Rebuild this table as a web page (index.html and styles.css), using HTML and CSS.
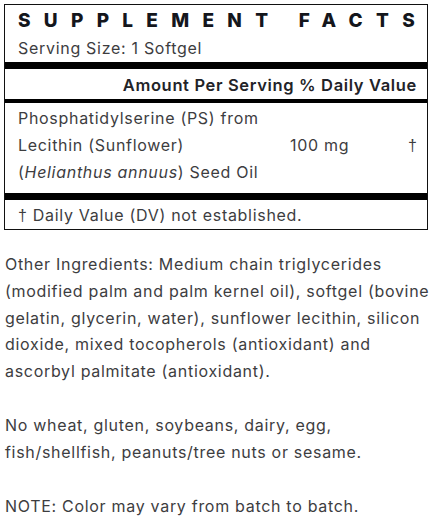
FILE: index.html
```html
<!DOCTYPE html>
<html>
<head>
<meta charset="utf-8">
<link rel="stylesheet" href="styles.css">
</head>
<body>
<div class="facts">
  <div class="title">SUPPLEMENT FACTS</div>
  <div class="serving">Serving Size: 1 Softgel</div>
  <div class="bar thick"></div>
  <div class="head">Amount Per Serving % Daily Value</div>
  <div class="bar thin"></div>
  <div class="row">
    <div class="name">Phosphatidylserine (PS) from<br>Lecithin (Sunflower)<br>(<i>Helianthus annuus</i>) Seed Oil</div>
    <div class="amt">100 mg</div>
    <div class="dv"><span class="dagger">†</span></div>
  </div>
  <div class="bar thick"></div>
  <div class="foot"><span class="dagger">†</span> Daily Value (DV) not established.</div>
</div>
<p class="text">Other Ingredients: Medium chain triglycerides<br>(modified palm and palm kernel oil), softgel (bovine<br>gelatin, glycerin, water), sunflower lecithin, silicon<br>dioxide, mixed tocopherols (antioxidant) and<br>ascorbyl palmitate (antioxidant).</p>
<p class="text">No wheat, gluten, soybeans, dairy, egg,<br>fish/shellfish, peanuts/tree nuts or sesame.</p>
<p class="text">NOTE: Color may vary from batch to batch.</p>
</body>
</html>
```

FILE: styles.css
```css
html, body { margin: 0; padding: 0; background: #fff; }
body {
  font-family: Inter, "Noto Sans", sans-serif;
  color: #3d3d3f;
  padding: 4px 0 0 4px;
  letter-spacing: 0.7px;
}
.facts {
  border: 1px solid #111;
  width: 424px;
  box-sizing: border-box;
}
.title {
  font-weight: 800;
  font-size: 19px;
  letter-spacing: 13.3px;
  color: #14161c;
  padding: 3px 0 0 13px;
  line-height: 26px;
  white-space: nowrap;
  overflow: hidden;
}
.serving {
  font-size: 16px;
  padding-left: 13px;
  line-height: 28px;
}
.bar { background: #000; }
.thick { height: 7px; }
.thin { height: 4px; }
.head {
  text-align: right;
  font-weight: 600;
  font-size: 16.5px;
  letter-spacing: 0.65px;
  color: #222328;
  padding: 2px 10px 0 0;
  line-height: 28px;
}
.row {
  display: flex;
  align-items: center;
  padding: 2px 0 7px 13px;
  font-size: 16px;
  line-height: 27px;
}
.name { width: 272px; }
.amt { width: 118px; }
.dagger { font-family: "Liberation Sans", sans-serif; font-weight: 300; }
.foot {
  font-size: 16px;
  padding: 2px 0 0 13px;
  line-height: 27px;
}
.text {
  font-size: 16px;
  line-height: 26.8px;
  margin: 21px 0 27px 1px;
  white-space: nowrap;
}
.text + .text { margin-top: 0; }
```
